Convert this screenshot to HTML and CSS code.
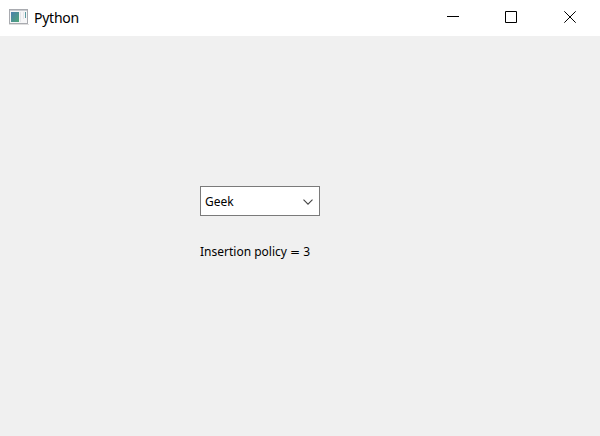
FILE: index.html
```html
<!DOCTYPE html>
<html lang="en">
<head>
<meta charset="utf-8">
<title>Python</title>
<link rel="stylesheet" href="styles.css">
</head>
<body>
<header class="titlebar">
  <svg class="app-icon" width="20" height="16" viewBox="0 0 20 16">
    <defs>
      <linearGradient id="pane" x1="0" y1="0" x2="1" y2="1">
        <stop offset="0" stop-color="#4a7fae"/>
        <stop offset="1" stop-color="#4fa678"/>
      </linearGradient>
    </defs>
    <rect x=".5" y=".5" width="18" height="14" fill="#f6f6f7" stroke="#a9abb0"/>
    <path d="M1 1.5h17" stroke="#c8cbd1"/>
    <path d="M0 15.5h20" stroke="#dedede"/>
    <rect x="2" y="3" width="8" height="10" fill="url(#pane)"/>
    <path d="M11.5 3v10M14.5 3v7" stroke="#e4e5ea"/>
    <path d="M16.5 3v6" stroke="#5a9aa0"/>
  </svg>
  <h1 class="title">Python</h1>
  <div class="controls">
    <svg width="12" height="12" viewBox="0 0 12 12"><path d="M0 5.5h12" stroke="#000"/></svg>
    <svg width="12" height="12" viewBox="0 0 12 12"><path d="M.5.5h11v11H.5z" fill="none" stroke="#000"/></svg>
    <svg width="12" height="12" viewBox="0 0 12 12"><path d="M.3.3l11.4 11.4M11.7.3L.3 11.7" stroke="#000"/></svg>
  </div>
</header>
<main class="content">
  <div class="combo">
    <span class="combo-text">Geek</span>
    <svg width="10" height="6" viewBox="0 0 10 6"><path d="M.5.6L5 5.1 9.5.6" fill="none" stroke="#444" stroke-width="1.1"/></svg>
  </div>
  <p class="label">Insertion policy <span class="equals">=</span> 3</p>
</main>
</body>
</html>
```

FILE: styles.css
```css
* {
  box-sizing: border-box;
}

body {
  margin: 0;
  height: 436px;
  display: flex;
  flex-direction: column;
  background: #f0f0f0;
  color: #000;
  font: 12px/16px "Noto Sans", sans-serif;
  overflow: hidden;
}

svg {
  display: block;
}

.titlebar {
  height: 36px;
  display: flex;
  align-items: flex-start;
  padding: 9px 24px 0 9px;
  background: #fff;
}

.title {
  margin: 0 0 0 5px;
  font: 14px/18px "Noto Sans", sans-serif;
  letter-spacing: -0.25px;
}

.controls {
  display: flex;
  gap: 47px;
  margin: 2px 0 0 auto;
}

.controls svg:first-child {
  margin-right: -1px;
}

.content {
  padding: 150px 0 0 200px;
}

.combo {
  width: 120px;
  height: 30px;
  display: flex;
  align-items: center;
  justify-content: space-between;
  padding: 1px 6px 0 4px;
  border: 1px solid #7a7a7a;
  background: #fff;
}

.combo-text {
  padding-top: 1px;
}

.label {
  margin: 28px 0 0;
}

.equals {
  font-family: "DejaVu Sans", sans-serif;
  line-height: 1;
}
```
